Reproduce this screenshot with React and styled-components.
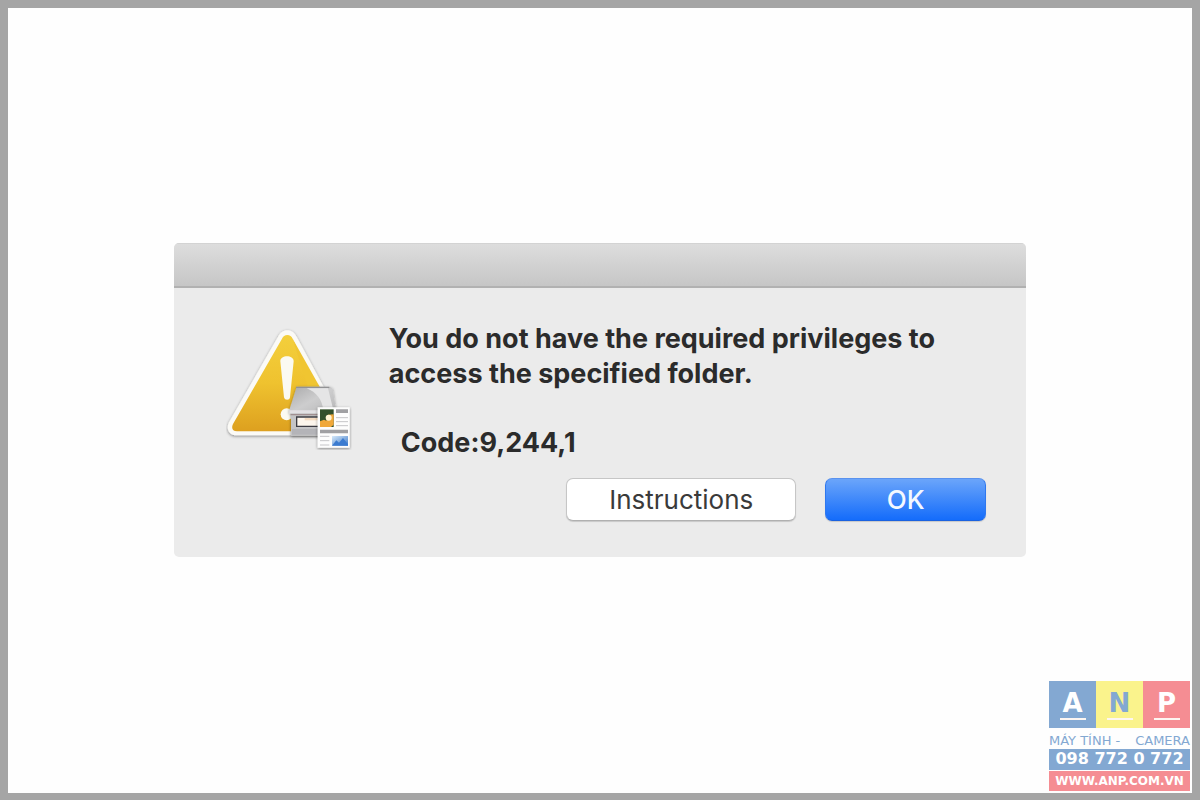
import React from 'react';
import styled, {createGlobalStyle} from 'styled-components';

const GlobalStyle = createGlobalStyle`
  *, *::before, *::after {
    box-sizing: border-box;
  }

  body {
    margin: 0;
    background: #fefefe;
    font-family: Inter, "Liberation Sans", sans-serif;
  }
`;

const Page = styled.div`
  position: relative;
  min-height: 100vh;
  display: flex;
  justify-content: center;
  align-items: center;
  padding-bottom: 1px;
  border: 8px solid #a5a5a5;
  border-bottom-width: 7px;
  background: #fefefe;
`;

const Dialog = styled.section`
  width: 72%;
  min-width: 700px;
  border-radius: 5px;
  background: #ebebeb;
  overflow: hidden;
`;

const TitleBar = styled.header`
  height: 45px;
  border-top: 1px solid #d3d3d3;
  border-bottom: 2px solid #b1b1b1;
  background: linear-gradient(#dddddd, #c6c6c6);
`;

const Content = styled.div`
  display: flex;
  align-items: flex-start;
  gap: 37px;
  padding: 33px 40px 0 52px;
`;

const IconHolder = styled.div`
  flex: none;
  padding-top: 6px;

  svg {
    display: block;
  }
`;

const Message = styled.div`
  max-width: 570px;
  color: #2b2b2b;
  font-size: 27px;
  font-weight: 700;
  line-height: 35px;
`;

const Paragraph = styled.p`
  margin: 0 0 ${({spaced}) => spaced ? '34px' : '0'};
  padding-left: ${({indent}) => indent ? '12px' : '0'};
`;

const Actions = styled.footer`
  display: flex;
  justify-content: flex-end;
  gap: 29px;
  padding: 18px 40px 36px;
`;

const Button = styled.button`
  width: ${({primary}) => primary ? '161px' : '230px'};
  height: 43px;
  padding: 0;
  border: 1px solid;
  border-color: ${({primary}) => primary ? '#5a92ee #2f78ef #1a62e0' : '#c6c6c6 #c6c6c6 #b0b0b0'};
  border-radius: 7px;
  background: ${({primary}) => primary ? 'linear-gradient(#6ba5fa, #146cfb)' : '#ffffff'};
  box-shadow: 0 1px 1px rgba(0, 0, 0, .15);
  color: ${({primary}) => primary ? '#f4f8ff' : '#3a3a3a'};
  font-family: inherit;
  font-size: 26px;
  font-weight: ${({primary}) => primary ? 500 : 400};
  line-height: 40px;
`;

const Brand = styled.aside`
  position: absolute;
  right: 2px;
  bottom: 2px;
  width: 141px;
  font-family: "DejaVu Sans", sans-serif;
  text-align: center;
  white-space: nowrap;
`;

const Tiles = styled.div`
  display: grid;
  grid-template-columns: repeat(3, 1fr);
  height: 47px;
`;

const Tile = styled.span`
  display: flex;
  flex-direction: column;
  align-items: center;
  justify-content: center;
  background: ${({bg}) => bg};
  color: ${({ink}) => ink};
  font-size: 26px;
  font-weight: 700;
  line-height: 28px;

  &::after {
    content: '';
    width: 26px;
    height: 2px;
    margin-top: 1px;
    background: #fdf6f2;
  }
`;

const Tagline = styled.div`
  display: flex;
  justify-content: space-between;
  padding-top: 5px;
  color: #83a8d2;
  font-size: 13px;
  line-height: 16px;
`;

const Strip = styled.a`
  display: block;
  height: 21px;
  background: ${({bg}) => bg};
  color: #ffffff;
  font-size: ${({size}) => size};
  font-weight: 700;
  line-height: 20px;
  text-decoration: none;

  & + & {
    border-top: 1px solid #fefefe;
  }
`;

const WarningIcon = () => (
    <svg width="126" height="123" viewBox="48 36 378 369" role="img" aria-label="Warning">
        <defs>
            <linearGradient id="amber" x1="0" y1="0" x2="0" y2="1">
                <stop offset="0" stopColor="#f3cf3c"/>
                <stop offset=".5" stopColor="#efc22f"/>
                <stop offset="1" stopColor="#dda01f"/>
            </linearGradient>
            <linearGradient id="lid" x1="0" y1="0" x2="1" y2="1">
                <stop offset="0" stopColor="#a9a9aa"/>
                <stop offset=".5" stopColor="#cdcdce"/>
                <stop offset="1" stopColor="#b5b5b6"/>
            </linearGradient>
            <linearGradient id="sky" x1="0" y1="0" x2="1" y2="1">
                <stop offset="0" stopColor="#d6e9fa"/>
                <stop offset="1" stopColor="#3c79c8"/>
            </linearGradient>
            <filter id="shade" x="-10%" y="-10%" width="120%" height="125%">
                <feDropShadow dx="0" dy="3" stdDeviation="4" floodColor="#000" floodOpacity=".45"/>
            </filter>
            <clipPath id="triangleClip">
                <path d="M40 30h386v190h-50v160H40z"/>
            </clipPath>
        </defs>

        <g clipPath="url(#triangleClip)">
            <path
                d="M232 46c-13 0-21 7-28 19L57 322c-10 19 0 39 22 39h304c18 0 27-18 17-36L260 65c-7-12-15-19-28-19z"
                fill="#fbfaf6" filter="url(#shade)"
            />
        </g>
        <path
            d="M232 60c-8 0-12 4-16 11L69 327c-6 12-1 22 12 22h290L248 71c-4-7-8-11-16-11z"
            fill="url(#amber)"
        />
        <path d="M248 71l90 160h-40z" fill="#f0c531"/>
        <path d="M211 139c0-20 40-20 40 0l-11 108c-1 10-16 10-18 0z" fill="#fbfaf2"/>
        <circle cx="230" cy="298" r="18" fill="#fbfaf2"/>

        {/* scanner */}
        <g filter="url(#shade)">
            <path d="M243 292h130v70H243z" fill="#c4c4c6"/>
            <path d="M260 215h97c6 0 10 3 11 8l10 63v9H238v-10z" fill="url(#lid)"/>
        </g>
        <path d="M290 220h64l16 65h-30c-4-31-20-53-50-65z" fill="#e5e5e6"/>
        <path d="M258 217h100" stroke="#929294" strokeWidth="4"/>
        <path d="M238 286h140v9H238z" fill="#e3e1e4"/>
        <path d="M242 299h100" stroke="#a18f91" strokeWidth="4"/>
        <path d="M260 306h76v28h-76z" fill="#fdf6ed" stroke="#3d3c43" strokeWidth="4"/>
        <path d="M284 309h52v7h-52z" fill="#f5dcc2"/>
        <path d="M246 342h80v17h-80z" fill="#b4b4b8"/>

        {/* scanned page */}
        <path d="M323 277h96v121h-96z" fill="#fdfdfd" filter="url(#shade)"/>
        <path d="M330 283h41v53h-41z" fill="#33502a"/>
        <path d="M330 319l12-5 7 3 5-18 17-1v31l-8 7h-33z" fill="#f0a83a"/>
        <circle cx="356" cy="308" r="9" fill="#fff3d2"/>
        <path d="M378 283h36v11h-36zM330 344h84v11h-84z" fill="#a0a0a3"/>
        <path
            d="M378 308h36M378 320h36M378 332h36M330 364h28M330 377h28M330 390h28"
            stroke="#c5c5c8" strokeWidth="3"
        />
        <path d="M366 363h48v29h-48z" fill="url(#sky)"/>
        <path d="M366 392l13-16 8 7 12-14 15 19v4z" fill="#3b7bd0"/>
    </svg>
);

const tiles = [
    {letter: 'A', bg: '#83a8d2', ink: '#ffffff'},
    {letter: 'N', bg: '#faf38c', ink: '#83a8d2'},
    {letter: 'P', bg: '#f58d93', ink: '#ffffff'}
];

const App = () => (
    <>
        <GlobalStyle/>
        <Page>
            <Dialog role="alertdialog" aria-describedby="message">
                <TitleBar/>
                <Content>
                    <IconHolder>
                        <WarningIcon/>
                    </IconHolder>
                    <Message id="message">
                        <Paragraph spaced>You do not have the required privileges to access the specified folder.</Paragraph>
                        <Paragraph indent>Code:9,244,1</Paragraph>
                    </Message>
                </Content>
                <Actions>
                    <Button type="button">Instructions</Button>
                    <Button type="button" primary>OK</Button>
                </Actions>
            </Dialog>

            <Brand>
                <Tiles>
                    {tiles.map(({letter, bg, ink}) => (
                        <Tile key={letter} bg={bg} ink={ink}>{letter}</Tile>
                    ))}
                </Tiles>
                <Tagline>
                    <span>MÁY TÍNH -</span>
                    <span>CAMERA</span>
                </Tagline>
                <Strip href="tel:0987720772" bg="#83a8d2" size="16px">098 772 0 772</Strip>
                <Strip href="#" bg="#f58d93" size="12px">WWW.ANP.COM.VN</Strip>
            </Brand>
        </Page>
    </>
);

export default App;
